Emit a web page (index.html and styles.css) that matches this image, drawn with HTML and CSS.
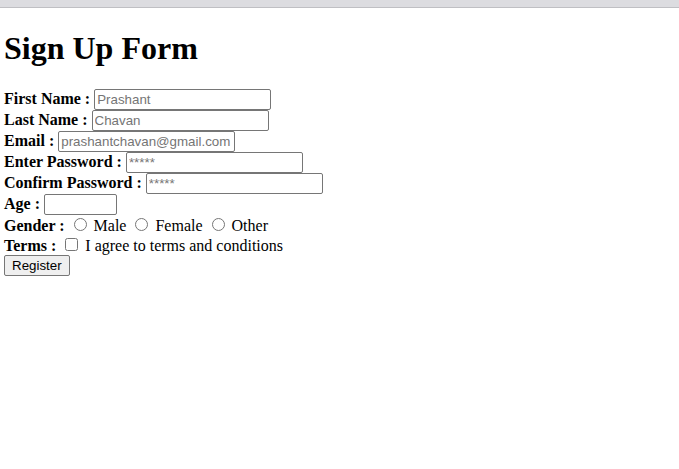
FILE: index.html
```html
<!DOCTYPE html>
<html>
<head>
<meta charset="utf-8">
<title>Sign Up Form</title>
<link rel="stylesheet" href="styles.css">
</head>
<body>
<div class="topbar"></div>
<main class="page">
<h1 class="title">Sign Up Form</h1>
<form class="form">
<label class="lbl" for="fn">First Name :</label> <input class="field" id="fn" type="text" placeholder="Prashant"><br>
<label class="lbl" for="ln">Last Name :</label> <input class="field" id="ln" type="text" placeholder="Chavan"><br>
<label class="lbl" for="em">Email :</label> <input class="field" id="em" type="email" placeholder="prashantchavan@gmail.com"><br>
<label class="lbl" for="pw">Enter Password :</label> <input class="field" id="pw" type="password" placeholder="*****"><br>
<label class="lbl" for="cpw">Confirm Password :</label> <input class="field" id="cpw" type="password" placeholder="*****"><br>
<label class="lbl" for="age">Age :</label> <input class="field age" id="age" type="number"><br>
<span class="lbl">Gender :</span> <input class="choice" type="radio" name="g" id="m"> <label for="m">Male</label> <input class="choice" type="radio" name="g" id="f"> <label for="f">Female</label> <input class="choice" type="radio" name="g" id="o"> <label for="o">Other</label><br>
<span class="lbl">Terms :</span> <input class="choice" type="checkbox" id="t"> <label for="t">I agree to terms and conditions</label><br>
<button class="btn" type="button">Register</button>
</form>
</main>
</body>
</html>
```
FILE: styles.css
```css
html, body {
  margin: 0;
  padding: 0;
  background: #ffffff;
}
body {
  font-family: "Liberation Serif", "Times New Roman", serif;
  font-size: 16px;
  color: #000;
}
.topbar {
  height: 7px;
  background: #dcdce0;
  border-bottom: 1px solid #bfbfc3;
}
.page {
  padding: 0 4px;
}
.title {
  font-size: 32px;
  font-weight: bold;
  margin: 22px 0 22px;
}
.form {
  margin: 0;
}
.lbl {
  font-weight: bold;
}
.field {
  font-family: "Liberation Sans", Arial, sans-serif;
  font-size: 13.333px;
  width: 177px;
  height: 21px;
  box-sizing: border-box;
  padding: 1px 2px;
  border: 1px solid #767676;
  border-radius: 2px;
  margin: 0;
  vertical-align: baseline;
}
.field::placeholder {
  color: #757575;
}
.age {
  width: 73px;
}
.age::-webkit-inner-spin-button,
.age::-webkit-outer-spin-button {
  -webkit-appearance: none;
  margin: 0;
}
.choice {
  margin: 3px 3px 0 5px;
}
.btn {
  font-family: "Liberation Sans", Arial, sans-serif;
  font-size: 13.333px;
  height: 21px;
  padding: 1px 7px;
  margin: 0;
  background: #efefef;
  border: 1px solid #767676;
  border-radius: 2px;
  color: #000;
}
```
